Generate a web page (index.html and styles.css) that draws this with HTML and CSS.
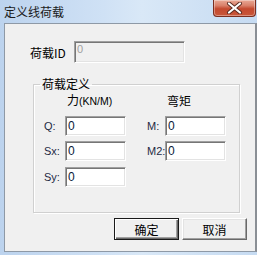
FILE: index.html
```html
<!DOCTYPE html>
<html>
<head>
<meta charset="utf-8">
<link rel="stylesheet" href="styles.css">
</head>
<body>
<div class="window">
  <div class="titlebar">
    <span class="title">定义线荷载</span>
    <button class="close" aria-label="关闭">
      <svg width="17" height="12" viewBox="0 0 17 12">
        <path d="M3 1.5 L14 10.5 M14 1.5 L3 10.5" stroke="#5a2a20" stroke-width="4" stroke-linecap="round"/>
        <path d="M3 1.5 L14 10.5 M14 1.5 L3 10.5" stroke="#ffffff" stroke-width="2.2" stroke-linecap="round"/>
      </svg>
    </button>
  </div>
  <div class="client">
    <div class="id-row">
      <span class="id-label">荷载ID</span>
      <input class="edit disabled" value="0" disabled>
    </div>
    <fieldset class="group">
      <legend>荷载定义</legend>
      <div class="grid">
        <span class="head c2">力<span class="lat">(KN/M)</span></span>
        <span class="head c4">弯矩</span>
        <span class="lbl r2">Q:</span><input class="edit col2 r2" value="0">
        <span class="lbl lbl2 r2">M:</span><input class="edit col4 r2" value="0">
        <span class="lbl r3">Sx:</span><input class="edit col2 r3" value="0">
        <span class="lbl lbl2 r3">M2:</span><input class="edit col4 r3" value="0">
        <span class="lbl r4">Sy:</span><input class="edit col2 r4" value="0">
      </div>
    </fieldset>
    <div class="buttons">
      <button class="btn default">确定</button>
      <button class="btn">取消</button>
    </div>
  </div>
</div>
</body>
</html>
```

FILE: styles.css
```css
* { box-sizing: border-box; }
html, body { margin: 0; padding: 0; }
body {
  width: 257px;
  height: 255px;
  overflow: hidden;
  font-family: "Noto Sans CJK SC", "Noto Sans", sans-serif;
  font-size: 12px;
  color: #000;
}
.window {
  width: 257px;
  height: 255px;
  display: flex;
  flex-direction: column;
  background: linear-gradient(90deg, #bcd3ee 0%, #cfe1f5 40%, #d9e8f7 55%, #c6dbf2 100%);
}
.titlebar {
  height: 23px;
  flex: none;
  display: flex;
  align-items: flex-start;
  justify-content: space-between;
}
.title {
  margin: 4px 0 0 4px;
  font-size: 12px;
  line-height: 15px;
  color: #1a1a1a;
}
.close {
  width: 43px;
  height: 17px;
  margin: 0 1px 0 0;
  padding: 0;
  border: 1px solid #7a2e20;
  border-top: none;
  border-radius: 0 0 4px 4px;
  background: linear-gradient(180deg, #e9a996 0%, #d9806a 35%, #c4492f 55%, #c8573a 100%);
  box-shadow: inset 0 0 0 1px rgba(255,255,255,0.35);
  display: flex;
  align-items: center;
  justify-content: center;
}
.client {
  flex: 1;
  margin: 0 0 3px 4px;
  width: 253px;
  background: #f0f0f0;
  border: 1px solid #8e99a6;
  border-right: 2px solid #8a8f95;
  display: flex;
  flex-direction: column;
}
.id-row {
  display: flex;
  align-items: center;
  margin: 17px 0 0 25px;
  height: 22px;
}
.id-label {
  width: 44px;
  line-height: 14px;
  padding-top: 1px;
}
.edit {
  height: 20px;
  width: 61px;
  margin: 0;
  padding: 0 0 0 2px;
  font-family: "Liberation Sans", sans-serif;
  font-size: 12px;
  color: #0a1a3a;
  background: #fff;
  border: 1px solid;
  border-color: #a0a0a0 #ffffff #ffffff #a0a0a0;
  box-shadow: inset 1px 1px 0 #767676, inset -1px -1px 0 #e3e3e3;
  outline: none;
}
.edit.disabled {
  width: 111px;
  height: 22px;
  padding-bottom: 6px;
  color: #a0a0a0;
  font-size: 11px;
  background: #f0f0f0;
}
.group {
  margin: 14px 0 0 28px;
  width: 207px;
  padding: 0 0 26px 0;
  border: 1px solid #d0d0d0;
  box-shadow: inset 1px 1px 0 #ffffff, 1px 1px 0 #ffffff;
  min-width: 0;
}
.group legend {
  margin-left: 6px;
  padding: 0 2px;
  line-height: 14px;
  font-size: 12px;
}
.grid {
  margin-top: 6px;
  display: grid;
  grid-template-columns: 31px 61px 39px 62px;
  grid-template-rows: 14px 20px 20px 20px;
  row-gap: 5px;
  align-items: center;
}
.grid .head {
  line-height: 14px;
  padding-left: 2px;
  white-space: nowrap;
  margin-bottom: 7px;
}
.lat {
  font-family: "Liberation Sans", sans-serif;
  font-size: 10.5px;
}
.grid .c2 { grid-column: 2; grid-row: 1; }
.grid .c4 { grid-column: 4; grid-row: 1; }
.col2 { grid-column: 2; }
.col4 { grid-column: 4; }
.r2 { grid-row: 2; }
.r3 { grid-row: 3; }
.r4 { grid-row: 4; }
.grid .r4 { margin-top: 1px; }
.lbl {
  grid-column: 1;
  padding-left: 10px;
  font-family: "Liberation Sans", sans-serif;
  font-size: 11px;
  color: #1e2a44;
  line-height: 14px;
}
.lbl2 {
  grid-column: 3;
  padding-left: 21px;
}
.buttons {
  display: flex;
  justify-content: flex-end;
  gap: 3px;
  margin-top: 5px;
  padding-right: 8px;
}
.btn {
  width: 65px;
  height: 22px;
  margin: 0;
  padding: 0;
  font-family: "Noto Sans CJK SC", sans-serif;
  font-size: 12px;
  color: #000;
  background: #f0f0f0;
  border: 1px solid;
  border-color: #ffffff #696969 #696969 #ffffff;
  box-shadow: inset -1px -1px 0 #a0a0a0, inset 1px 1px 0 #e3e3e3;
}
.btn.default {
  border: 1px solid #1a1a1a;
  box-shadow: inset 1px 1px 0 #ffffff, inset -1px -1px 0 #696969, inset -2px -2px 0 #a0a0a0;
}
```
